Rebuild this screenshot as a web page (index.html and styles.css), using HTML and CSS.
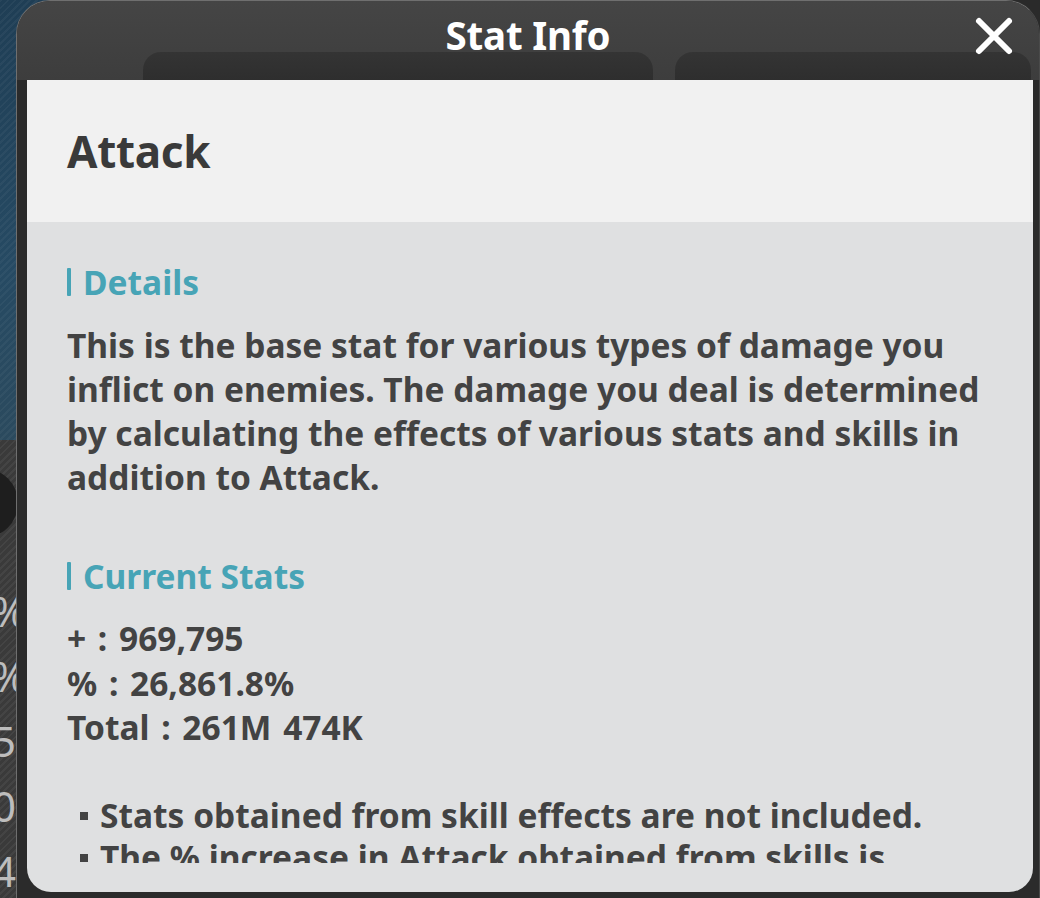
FILE: index.html
```html
<!DOCTYPE html>
<html lang="en">
<head>
<meta charset="utf-8">
<title>Stat Info</title>
<link rel="stylesheet" href="styles.css">
</head>
<body>
<div class="page">
  <aside class="backdrop">
    <div class="backdrop-top"></div>
    <div class="backdrop-bottom">
      <div class="knob"></div>
      <div class="side-nums">
        <span>%</span>
        <span>%</span>
        <span>5</span>
        <span>0</span>
        <span>4</span>
      </div>
    </div>
  </aside>
  <section class="modal">
    <header class="modal-head">
      <div class="tabs">
        <div class="tab tab-a"></div>
        <div class="tab tab-b"></div>
      </div>
      <h1 class="modal-title">Stat Info</h1>
      <button class="close" aria-label="Close">
        <svg viewBox="0 0 40 40" width="40" height="40">
          <path d="M5 5 L35 35 M35 5 L5 35" stroke="#ffffff" stroke-width="6" stroke-linecap="round" fill="none"/>
        </svg>
      </button>
    </header>
    <div class="panel">
      <div class="panel-top">
        <h2 class="stat-name">Attack</h2>
      </div>
      <div class="panel-body">
        <div class="scroll">
          <h3 class="section-title">Details</h3>
          <p class="desc">This is the base stat for various types of damage you inflict on enemies. The damage you deal is determined by calculating the effects of various stats and skills in addition to Attack.</p>
          <h3 class="section-title section-gap">Current Stats</h3>
          <ul class="stats">
            <li>+ : 969,795</li>
            <li>% : 26,861.8%</li>
            <li>Total : 261M 474K</li>
          </ul>
          <ul class="notes">
            <li>Stats obtained from skill effects are not included.</li>
            <li>The % increase in Attack obtained from skills is applied separately.</li>
          </ul>
        </div>
      </div>
    </div>
  </section>
</div>
</body>
</html>
```

FILE: styles.css
```css
html, body {
  margin: 0;
  padding: 0;
  height: 100%;
  overflow: hidden;
}
body {
  background: #2a2a2a;
  font-family: "Noto Sans", "Open Sans", "Liberation Sans", sans-serif;
}
.page {
  display: flex;
  height: 898px;
  width: 1040px;
  position: relative;
}
.backdrop {
  position: absolute;
  left: 0;
  top: 0;
  width: 60px;
  height: 898px;
  display: flex;
  flex-direction: column;
  z-index: 0;
}
.backdrop-top {
  height: 440px;
  background:
    repeating-linear-gradient(135deg, rgba(255,255,255,0.04) 0 2px, rgba(0,0,0,0) 2px 5px),
    linear-gradient(180deg, #1f3e55 0%, #264a63 60%, #2b4a5e 100%);
}
.backdrop-bottom {
  flex: 1;
  background:
    repeating-linear-gradient(135deg, rgba(255,255,255,0.05) 0 2px, rgba(0,0,0,0) 2px 5px),
    #3a3a3a;
  position: relative;
}
.knob {
  width: 70px;
  height: 70px;
  border-radius: 50%;
  background: #1e1e1e;
  margin: 28px 0 0 -52px;
}
.side-nums {
  display: flex;
  flex-direction: column;
  margin-top: 48px;
  margin-left: -8px;
  gap: 16px;
  color: #bdbdbd;
  font-size: 42px;
  line-height: 49px;
  font-family: "Noto Sans", sans-serif;
}
.modal {
  position: relative;
  z-index: 1;
  margin-left: 16px;
  flex: 1;
  height: 930px;
  background: #2b2b2b;
  border: 1.5px solid #6f6f6f;
  border-right-color: #4a4a4a;
  border-radius: 34px;
  display: flex;
  flex-direction: column;
  overflow: hidden;
}
.modal-head {
  position: relative;
  height: 79px;
  flex: none;
  background: linear-gradient(180deg, #454545 0%, #3d3d3d 100%);
  display: flex;
  align-items: flex-start;
  justify-content: center;
}
.tabs {
  position: absolute;
  left: 0;
  right: 0;
  bottom: 0;
  height: 28px;
  display: flex;
  padding-left: 126px;
  gap: 22px;
}
.tab {
  height: 28px;
  background: linear-gradient(180deg, #343434, #2e2e2e);
  border-radius: 18px 18px 0 0;
}
.tab-a { width: 510px; }
.tab-b { width: 356px; }
.modal-title {
  position: relative;
  margin: 10px 0 0 0;
  color: #ffffff;
  font-size: 38.5px;
  font-weight: 700;
  line-height: 48px;
  letter-spacing: -0.2px;
}
.close {
  position: absolute;
  right: 25px;
  top: 15px;
  width: 40px;
  height: 40px;
  padding: 0;
  border: 0;
  background: transparent;
  display: flex;
}
.panel {
  margin: 0 6px 0 10px;
  height: 812px;
  background: #dfe0e1;
  border-radius: 0 0 24px 24px;
  display: flex;
  flex-direction: column;
  overflow: hidden;
}
.panel-top {
  height: 142px;
  flex: none;
  background: #f1f1f1;
  display: flex;
  align-items: center;
  padding-left: 40px;
}
.stat-name {
  margin: 0;
  font-size: 44px;
  font-weight: 700;
  color: #3a3a3a;
  line-height: 60px;
  letter-spacing: -0.3px;
}
.panel-body {
  flex: 1;
  padding: 0 40px;
}
.scroll {
  height: 641px;
  overflow: hidden;
  padding-top: 38px;
  box-sizing: border-box;
  width: 924px;
}
.section-title {
  margin: 0;
  display: flex;
  align-items: center;
  gap: 12px;
  color: #47a4b6;
  font-size: 33.5px;
  font-weight: 700;
  line-height: 44px;
}
.section-title::before {
  content: "";
  width: 4px;
  height: 28px;
  background: #47a4b6;
  border-radius: 1px;
  flex: none;
}
.section-gap {
  margin-top: 55px;
}
.desc {
  margin: 19px 0 0 0;
  color: #434343;
  font-size: 33.5px;
  font-weight: 700;
  line-height: 44px;
}
.stats {
  list-style: none;
  margin: 18px 0 0 0;
  padding: 0;
  color: #434343;
  font-size: 33.5px;
  font-weight: 700;
  line-height: 44.5px;
}
.stats li {
  word-spacing: 3px;
}
.notes {
  list-style: none;
  margin: 44px 0 0 0;
  padding: 0 0 0 13px;
  color: #434343;
  font-size: 33.5px;
  font-weight: 700;
  line-height: 42px;
}
.notes li {
  display: flex;
  align-items: flex-start;
  gap: 12px;
}
.notes li::before {
  content: "";
  width: 8px;
  height: 8px;
  margin-top: 18px;
  background: #434343;
  flex: none;
}
```
